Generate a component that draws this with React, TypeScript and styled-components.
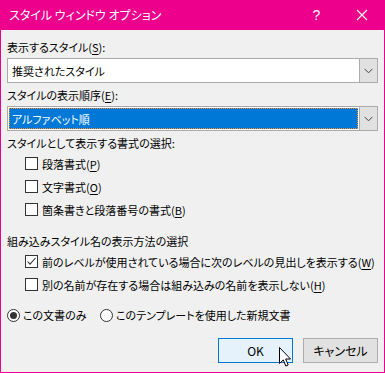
import React from 'react';
import styled, { createGlobalStyle } from 'styled-components';

const Global = createGlobalStyle`
  html, body { margin: 0; padding: 0; background: #f0f0f0; }
  #root { width: 385px; height: 373px; }
`;

const PINK = '#EC008C';
const FONT = `"Noto Sans CJK JP", "Noto Sans", sans-serif`;

const Window = styled.div`
  position: relative;
  width: 385px;
  height: 373px;
  box-sizing: border-box;
  border: 1px solid ${PINK};
  border-top: none;
  background: #f0f0f0;
  display: flex;
  flex-direction: column;
  font-family: ${FONT};
  font-size: 11px;
  color: #000;
  font-feature-settings: "palt";
  overflow: hidden;
`;

const TitleBar = styled.div`
  height: 30px;
  flex: none;
  background: ${PINK};
  display: flex;
  align-items: center;
  padding-left: 8px;
  color: #fff;
  font-size: 12px;
`;

const TitleText = styled.div`
  flex: 1;
  line-height: 30px;
`;

const TitleButton = styled.div`
  width: 45px;
  height: 30px;
  display: flex;
  align-items: center;
  justify-content: center;
  color: #fff;
  font-family: "Liberation Sans", sans-serif;
  font-size: 14px;
`;

const Body = styled.div`
  flex: 1;
  display: flex;
  flex-direction: column;
  padding: 0 6px;
`;

const Label = styled.div<{ $mt: number }>`
  margin-top: ${(p) => p.$mt}px;
  height: 18px;
  line-height: 18px;
  white-space: nowrap;
`;

const Combo = styled.div<{ $mt: number }>`
  margin-top: ${(p) => p.$mt}px;
  height: 25px;
  box-sizing: border-box;
  border: 1px solid #ababab;
  background: #fff;
  display: flex;
  align-items: stretch;
`;

const ComboValue = styled.div<{ $selected?: boolean }>`
  flex: 1;
  margin: ${(p) => (p.$selected ? '1px' : '0')};
  padding-left: ${(p) => (p.$selected ? '3px' : '4px')};
  display: flex;
  align-items: center;
  background: ${(p) => (p.$selected ? '#0078d7' : 'transparent')};
  color: ${(p) => (p.$selected ? '#fff' : '#000')};
  outline: ${(p) => (p.$selected ? '1px dotted #ff8c1a' : 'none')};
  outline-offset: -1px;
`;

const ComboButton = styled.div`
  width: 17px;
  flex: none;
  background: #e1e1e1;
  border-left: 1px solid #ababab;
  display: flex;
  align-items: center;
  justify-content: center;
`;

const List = styled.div`
  display: flex;
  flex-direction: column;
  padding-left: 18px;
`;

const CheckRow = styled.div`
  height: 23px;
  display: flex;
  align-items: center;
  gap: 4px;
  white-space: nowrap;
`;

const Box = styled.div`
  width: 13px;
  height: 13px;
  box-sizing: border-box;
  border: 1px solid #333;
  background: #fff;
  flex: none;
  display: flex;
  align-items: center;
  justify-content: center;
`;

const U = styled.span`
  text-decoration: underline;
  text-underline-offset: 2px;
`;

const RadioRow = styled.div`
  margin-top: 10px;
  height: 18px;
  display: flex;
  align-items: center;
  white-space: nowrap;
`;

const RadioItem = styled.div<{ $w?: number }>`
  display: flex;
  align-items: center;
  gap: 3px;
  width: ${(p) => (p.$w ? `${p.$w}px` : 'auto')};
`;

const RadioCircle = styled.div`
  width: 13px;
  height: 13px;
  box-sizing: border-box;
  border: 1px solid #333;
  border-radius: 50%;
  background: #fff;
  display: flex;
  align-items: center;
  justify-content: center;
  flex: none;
`;

const RadioDot = styled.div`
  width: 7px;
  height: 7px;
  border-radius: 50%;
  background: #333;
`;

const Buttons = styled.div`
  margin-top: 14px;
  display: flex;
  justify-content: flex-end;
  gap: 10px;
`;

const Button = styled.div<{ $default?: boolean }>`
  width: 75px;
  height: 25px;
  box-sizing: border-box;
  border: 1px solid ${(p) => (p.$default ? '#0078d7' : '#adadad')};
  background: ${(p) => (p.$default ? '#e5f1fb' : '#e1e1e1')};
  display: flex;
  align-items: center;
  justify-content: center;
  font-size: 12px;
`;

const Cursor = styled.svg`
  position: absolute;
  left: 278px;
  top: 347px;
`;

const Chevron = () => (
  <svg width="9" height="6" viewBox="0 0 9 6">
    <path d="M0.5 0.8 L4.5 4.8 L8.5 0.8" fill="none" stroke="#444" strokeWidth="1" />
  </svg>
);

const Check = ({ checked }: { checked?: boolean }) => (
  <Box>
    {checked && (
      <svg width="11" height="11" viewBox="0 0 11 11">
        <path d="M1.5 5.5 L4 8.2 L9.5 2" fill="none" stroke="#333" strokeWidth="1.1" />
      </svg>
    )}
  </Box>
);

export default function App() {
  return (
    <>
      <Global />
      <Window>
        <TitleBar>
          <TitleText>スタイル ウィンドウ オプション</TitleText>
          <TitleButton>?</TitleButton>
          <TitleButton>
            <svg width="12" height="12" viewBox="0 0 12 12">
              <path d="M1 1 L11 11 M11 1 L1 11" stroke="#fff" strokeWidth="1.2" />
            </svg>
          </TitleButton>
        </TitleBar>
        <Body>
          <Label $mt={8}>
            表示するスタイル(<U>S</U>):
          </Label>
          <Combo $mt={2}>
            <ComboValue>推奨されたスタイル</ComboValue>
            <ComboButton>
              <Chevron />
            </ComboButton>
          </Combo>
          <Label $mt={3}>
            スタイルの表示順序(<U>E</U>):
          </Label>
          <Combo $mt={2}>
            <ComboValue $selected>アルファベット順</ComboValue>
            <ComboButton>
              <Chevron />
            </ComboButton>
          </Combo>
          <Label $mt={3}>スタイルとして表示する書式の選択:</Label>
          <List>
            <CheckRow>
              <Check />
              <span>
                段落書式(<U>P</U>)
              </span>
            </CheckRow>
            <CheckRow>
              <Check />
              <span>
                文字書式(<U>O</U>)
              </span>
            </CheckRow>
            <CheckRow>
              <Check />
              <span>
                箇条書きと段落番号の書式(<U>B</U>)
              </span>
            </CheckRow>
          </List>
          <Label $mt={11}>組み込みスタイル名の表示方法の選択</Label>
          <List>
            <CheckRow>
              <Check checked />
              <span>
                前のレベルが使用されている場合に次のレベルの見出しを表示する(<U>W</U>)
              </span>
            </CheckRow>
            <CheckRow>
              <Check />
              <span>
                別の名前が存在する場合は組み込みの名前を表示しない(<U>H</U>)
              </span>
            </CheckRow>
          </List>
          <RadioRow>
            <RadioItem $w={93}>
              <RadioCircle>
                <RadioDot />
              </RadioCircle>
              <span>この文書のみ</span>
            </RadioItem>
            <RadioItem>
              <RadioCircle />
              <span>このテンプレートを使用した新規文書</span>
            </RadioItem>
          </RadioRow>
          <Buttons>
            <Button $default>OK</Button>
            <Button>キャンセル</Button>
          </Buttons>
        </Body>
        <Cursor width="13" height="21" viewBox="0 0 13 21">
          <path
            d="M0.5 0.5 L0.5 16.5 L4.3 12.9 L6.8 19 L9.2 18 L6.7 12 L11.5 12 Z"
            fill="#fff"
            stroke="#000"
            strokeWidth="1"
            strokeLinejoin="miter"
          />
        </Cursor>
      </Window>
    </>
  );
}
